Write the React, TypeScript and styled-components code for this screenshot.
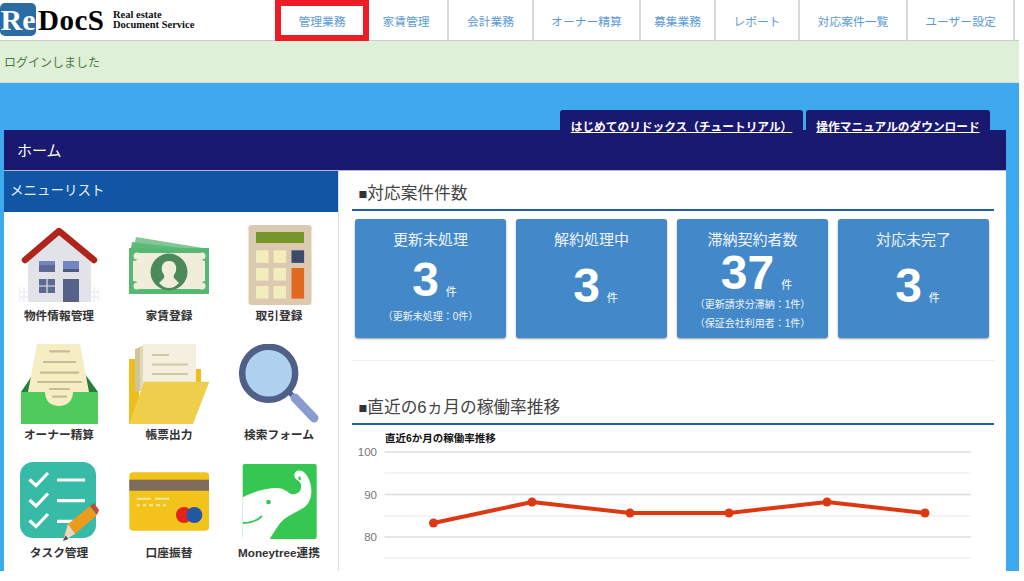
import React from 'react';
import styled, { createGlobalStyle } from 'styled-components';

const GlobalStyle = createGlobalStyle`
  html, body {
    margin: 0;
    padding: 0;
    background: #fff;
    font-family: "Liberation Sans", "Noto Sans CJK JP", sans-serif;
  }
`;

const NAV_ITEMS = [
  { label: '管理業務', width: 94, active: true },
  { label: '家賃管理', width: 84 },
  { label: '会計業務', width: 85 },
  { label: 'オーナー精算', width: 107 },
  { label: '募集業務', width: 75 },
  { label: 'レポート', width: 84 },
  { label: '対応案件一覧', width: 108 },
  { label: 'ユーザー設定', width: 107 },
];

const HouseIcon = () => (
  <svg viewBox="0 0 80 80" width="80" height="80">
    <g stroke="#eceef0" strokeWidth="1.5" fill="none">
      <path d="M0 62v15M5 62v15M10 62v15M70 62v15M75 62v15M80 62v15M0 67h10M0 72h10M70 67h10M70 72h10" />
    </g>
    <path d="M9 30 40 7l32 23v47H9z" fill="#e2e3e8" />
    <path d="M6 35 40 6l35 29" fill="none" stroke="#b0241c" strokeWidth="6.500" strokeLinecap="round" strokeLinejoin="round" />
    <rect x="20" y="36" width="16" height="11" fill="#5c6a92" />
    <rect x="20" y="36" width="16" height="4" fill="#7286c0" />
    <rect x="44" y="36" width="16" height="11" fill="#7286c0" />
    <rect x="44" y="44" width="16" height="3" fill="#4d5a80" />
    <rect x="20" y="54" width="16" height="14" fill="#5c6a92" />
    <path d="M28 54v14M20 61h16" stroke="#e2e3e8" strokeWidth="1.2" />
    <rect x="44" y="54" width="16" height="23" fill="#56628a" />
  </svg>
);

const MoneyIcon = () => (
  <svg viewBox="0 0 80 80" width="80" height="80">
    <path d="M7 12 80 24v10H3z" fill="#82c795" />
    <path d="M3 17 80 26v10H0z" fill="#5dba78" />
    <rect x="0" y="23" width="81" height="46" fill="#57b874" />
    <path d="M8 28h64l-1 3a6 6 0 0 0 5 5v20a6 6 0 0 0-5 5v3H10v-3a6 6 0 0 0-6-5V36a6 6 0 0 0 6-5z" fill="#f0eeda" />
    <circle cx="8" cy="31" r="3.5" fill="#f0eeda" />
    <circle cx="73" cy="31" r="3.5" fill="#f0eeda" />
    <circle cx="8" cy="61" r="3.5" fill="#f0eeda" />
    <circle cx="73" cy="61" r="3.5" fill="#f0eeda" />
    <circle cx="40" cy="47" r="18.5" fill="#4c8a5c" />
    <path d="M40 36c6 0 8 5 7 10-1 3-3 4-2 7l5 5c-3 3-6 5-10 5s-7-2-10-5l5-5c1-3-1-4-2-7-1-5 1-10 7-10z" fill="#f0eeda" />
  </svg>
);

const CalculatorIcon = () => {
  const cols = [17, 34.5, 52.5];
  const rows = [25.3, 43, 61];
  return (
    <svg viewBox="0 0 80 80" width="80" height="80">
      <rect x="9.5" y="0" width="63" height="80" rx="3" fill="#dccab0" />
      <rect x="17" y="7" width="48" height="11" fill="#76962b" />
      {rows.map((y) => cols.slice(0, 2).map((x) => (
        <rect key={`${x}-${y}`} x={x} y={y} width="12.6" height="12.6" fill="#f3ecbc" />
      )))}
      <rect x="52.5" y="25.3" width="12.6" height="12.6" fill="#3e4a69" />
      <rect x="52.5" y="43" width="12.6" height="30.6" fill="#e0691d" />
    </svg>
  );
};

const InboxIcon = () => (
  <svg viewBox="0 0 80 80" width="80" height="80">
    <path d="M2 48 14 30h52l13 18z" fill="#237f3a" />
    <path d="M18 0h43l9 48H9z" fill="#f4eec2" />
    <path d="M2 48h77v32H2z" fill="#4ecb5c" />
    <path d="M9 46h61l-16 2c0 9-6 14-14 14s-14-5-14-14z" fill="#f4eec2" />
    <g stroke="#c4bd9a" strokeWidth="2.2" strokeLinecap="round">
      <path d="M31 7.3h19M25 18h31M22 28.7h37M19 38h43M31 45h19M34 52.7h13" />
    </g>
  </svg>
);

const FolderIcon = () => (
  <svg viewBox="0 0 80 80" width="80" height="80">
    <path d="M0 15h10v65H0zM60 25h12v20H60z" fill="#f0bd1f" />
    <path d="M6 5 14 2v45H6z" fill="#cfc59a" />
    <path d="M11 2h5v45h-5z" fill="#e2d9b4" />
    <rect x="14" y="0" width="53" height="40" fill="#f4efde" />
    <g stroke="#cfc8a4" strokeWidth="2.2" strokeLinecap="round">
      <path d="M24 11h15M24 20.5h34M24 30h34" />
    </g>
    <path d="M15 37.7h65.3L64 80H.3z" fill="#efce4b" strokeLinejoin="round" />
  </svg>
);

const SearchIcon = () => (
  <svg viewBox="0 0 80 80" width="80" height="80">
    <path d="M50 48 58 56" stroke="#505f88" strokeWidth="5" />
    <path d="M56 54 75 74" stroke="#8a9ccf" strokeWidth="9" strokeLinecap="round" />
    <circle cx="29.7" cy="29.3" r="26.5" fill="#aed1ef" stroke="#505f88" strokeWidth="6.5" />
  </svg>
);

const TaskIcon = () => (
  <svg viewBox="0 0 80 80" width="80" height="80">
    <rect x="1" y="0" width="76" height="76" rx="13" fill="#37baa6" />
    <g fill="none" stroke="#fff" strokeWidth="3.2">
      <path d="M10.5 17.5 17 23.5 29 11M10.5 38 17 44 29 31.5M10.5 58.5 17 64.5 29 52" />
      <path d="M38 18h28M38 38.7h28M38 59.3h16" />
    </g>
    <path d="M49 62 71 44 78 53 56 72 44 77z" fill="#eb9c1f" />
    <path d="M71 44 75 41 80 48 78 53z" fill="#b7513c" />
    <path d="M49 62 56 72 44 79z" fill="#e4dcc4" />
    <path d="M46.5 73.5 44 79 49.5 77z" fill="#46505a" />
  </svg>
);

const CardIcon = () => (
  <svg viewBox="0 0 80 80" width="80" height="80">
    <rect x="0.3" y="10.3" width="80" height="58.4" rx="4" fill="#f2c41b" />
    <rect x="0.3" y="17.7" width="80" height="11" fill="#7e6c5a" />
    <path d="M7.7 36.7h14M26 36.7h14" stroke="#f8e7a0" strokeWidth="2" />
    <path d="M7.7 43.3h3M14 43.3h3M20 43.3h4M27 43.3h4M34 43.3h3" stroke="#f8e7a0" strokeWidth="2" />
    <circle cx="55" cy="53" r="8" fill="#e2241a" />
    <circle cx="65.3" cy="53" r="8" fill="#2058a5" />
  </svg>
);

const MoneytreeIcon = () => (
  <svg viewBox="0 0 80 80" width="80" height="80">
    <rect x="3.7" y="2" width="74" height="75" rx="2" fill="#36c752" />
    <path d="M3.700 35.300C14 30 26 26 37.700 26c6 0 10 3 14 6 5 1 9.300-1 10.300-6 .700-4-1-6-3-7.500-3-2-4.500-4-3.300-7 1-3 5-4 9-1.500 5 4 7.300 11 7.700 19 0 7-2.400 13-7.400 16.500-6 4-12 6-18.300 10.500-6 4-11 13-16 21H3.700z" fill="#fff" />
    <path d="M60 14c2 1 2.500 3 1.500 4.500-1.500-.5-3-2-1.500-4.500z" fill="#36c752" />
    <circle cx="29.500" cy="40" r="2.300" fill="#36c752" />
    <path d="M4 61c8 0 15-3 19-7" fill="none" stroke="#36c752" strokeWidth="1.800" />
  </svg>
);

const MENU_ITEMS = [
  { label: '物件情報管理', Icon: HouseIcon },
  { label: '家賃登録', Icon: MoneyIcon },
  { label: '取引登録', Icon: CalculatorIcon },
  { label: 'オーナー精算', Icon: InboxIcon },
  { label: '帳票出力', Icon: FolderIcon },
  { label: '検索フォーム', Icon: SearchIcon },
  { label: 'タスク管理', Icon: TaskIcon },
  { label: '口座振替', Icon: CardIcon },
  { label: 'Moneytree連携', Icon: MoneytreeIcon },
];

const STATS = [
  { title: '更新未処理', value: '3', top: 5, subTop: 2, subs: ['（更新未処理：0件）'] },
  { title: '解約処理中', value: '3', top: 11, subTop: 0, subs: [] },
  { title: '滞納契約者数', value: '37', top: -2, subTop: -3, subs: ['（更新請求分滞納：1件）', '（保証会社利用者：1件）'] },
  { title: '対応未完了', value: '3', top: 11, subTop: 0, subs: [] },
];

const GRID_LINES = [
  { y: 21, major: true, label: '100' },
  { y: 42, major: false },
  { y: 63.5, major: true, label: '90' },
  { y: 85, major: false },
  { y: 106, major: true, label: '80' },
  { y: 127, major: false },
];

const POINTS = [
  [81.5, 92],
  [180, 71],
  [278, 82],
  [377, 82],
  [475, 71],
  [573, 82],
];

const RateChart = () => (
  <svg width="642" height="140" viewBox="0 0 642 140">
    <text x="33" y="11" fontSize="10.500" fontWeight="700" fill="#111">直近6か月の稼働率推移</text>
    {GRID_LINES.map((line) => (
      <g key={line.y}>
        <line x1="32.500" x2="619" y1={line.y} y2={line.y} stroke={line.major ? '#dcdcdc' : '#f0f0f0'} strokeWidth="1.500" />
        {line.label && (
          <text x="25" y={line.y + 4} fontSize="11.500" fill="#777" textAnchor="end">{line.label}</text>
        )}
      </g>
    ))}
    <polyline points={POINTS.map((p) => p.join(',')).join(' ')} fill="none" stroke="#dc3912" strokeWidth="4" />
    {POINTS.map(([x, y]) => (
      <circle key={x} cx={x} cy={y} r="4.500" fill="#dc3912" />
    ))}
  </svg>
);

const App = () => (
  <>
    <GlobalStyle />
    <Page>
      <Header>
        <Logo>
          <LogoMark>Re</LogoMark>
          <LogoWord>DocS</LogoWord>
          <LogoTagline>Real estate<br />Document Service</LogoTagline>
        </Logo>
        <Nav>
          {NAV_ITEMS.map((item) => (
            <NavItem key={item.label} $width={item.width} $active={item.active}>{item.label}</NavItem>
          ))}
        </Nav>
      </Header>
      <Alert>ログインしました</Alert>
      <Main>
        <Tabs>
          <Tab $width={243}>はじめてのリドックス（チュートリアル）</Tab>
          <Tab $width={184}>操作マニュアルのダウンロード</Tab>
        </Tabs>
        <PageTitle>ホーム</PageTitle>
        <Content>
          <Sidebar>
            <SidebarTitle>メニューリスト</SidebarTitle>
            <MenuGrid>
              {MENU_ITEMS.map(({ label, Icon }) => (
                <MenuItem key={label}>
                  <Icon />
                  <MenuLabel>{label}</MenuLabel>
                </MenuItem>
              ))}
            </MenuGrid>
          </Sidebar>
          <Panel>
            <SectionTitle><Square>■</Square>対応案件件数</SectionTitle>
            <StatRow>
              {STATS.map((stat) => (
                <StatCard key={stat.title}>
                  <StatTitle>{stat.title}</StatTitle>
                  <StatValueRow $top={stat.top}>
                    <StatValue>{stat.value}</StatValue>
                    <StatUnit>件</StatUnit>
                  </StatValueRow>
                  <StatSubs $top={stat.subTop}>
                    {stat.subs.map((sub) => <StatSub key={sub}>{sub}</StatSub>)}
                  </StatSubs>
                </StatCard>
              ))}
            </StatRow>
            <Divider />
            <SectionTitle><Square>■</Square>直近の6ヵ月の稼働率推移</SectionTitle>
            <ChartWrap>
              <RateChart />
            </ChartWrap>
          </Panel>
        </Content>
      </Main>
    </Page>
  </>
);

const Page = styled.div`
  width: 1019px;
  height: 571px;
  display: flex;
  flex-direction: column;
  overflow: hidden;
  background: #fff;
`;

const Header = styled.header`
  height: 40px;
  flex-shrink: 0;
  display: flex;
  border-bottom: 1px solid #ccc;
  background: #fff;
`;

const Logo = styled.div`
  width: 275px;
  display: flex;
  align-items: center;
  font-family: "Liberation Serif", serif;
  font-weight: 700;
`;

const LogoMark = styled.div`
  width: 36px;
  height: 33px;
  margin-top: -1px;
  border-radius: 5px;
  background: #2a6ca3;
  color: #fff;
  font-size: 30px;
  line-height: 33px;
  text-align: center;
`;

const LogoWord = styled.div`
  width: 75px;
  margin-left: 2px;
  color: #000;
  font-size: 29px;
  letter-spacing: 0.5px;
`;

const LogoTagline = styled.div`
  color: #111;
  font-size: 10.500px;
  line-height: 10.500px;
  white-space: nowrap;
`;

const Nav = styled.nav`
  display: flex;
  height: 41px;
`;

const NavItem = styled.a<{ $width: number; $active?: boolean }>`
  box-sizing: border-box;
  width: ${({ $width }) => $width}px;
  height: 41px;
  display: flex;
  align-items: center;
  justify-content: center;
  color: #5b9bd5;
  font-size: 11.800px;
  border-right: ${({ $active }) => ($active ? '6px solid #ee1c25' : '2px solid #d8d8d8')};
  border-bottom: ${({ $active }) => ($active ? '6px solid #ee1c25' : '1px solid #ccc')};
  ${({ $active }) => $active && `
    border-top: 6px solid #ee1c25;
    border-left: 6px solid #ee1c25;
    margin-right: -4px;
    position: relative;
    z-index: 1;
  `}
`;

const Alert = styled.div`
  height: 42px;
  flex-shrink: 0;
  box-sizing: border-box;
  padding: 0 4px;
  display: flex;
  align-items: center;
  background: #dff0d8;
  border-bottom: 1px solid #cfe3c6;
  color: #4f7a45;
  font-size: 12px;
`;

const Main = styled.main`
  flex: 1;
  min-height: 0;
  display: flex;
  flex-direction: column;
  box-sizing: border-box;
  padding: 27px 13px 0 4px;
  background: #3fa9ef;
`;

const Tabs = styled.div`
  display: flex;
  justify-content: flex-end;
  gap: 3px;
  padding-right: 16px;
  margin-bottom: -10px;
  position: relative;
  z-index: 1;
`;

const Tab = styled.a<{ $width: number }>`
  box-sizing: border-box;
  width: ${({ $width }) => $width}px;
  height: 30px;
  padding-top: 9px;
  background: #191970;
  border-radius: 3px 3px 0 0;
  color: #fff;
  font-size: 11.700px;
  font-weight: 700;
  line-height: 16px;
  text-align: center;
  text-decoration: underline;
  white-space: nowrap;
`;

const PageTitle = styled.div`
  height: 40px;
  flex-shrink: 0;
  box-sizing: border-box;
  padding: 0 0 2px 13px;
  display: flex;
  align-items: center;
  background: #191970;
  color: #fff;
  font-size: 15px;
`;

const Content = styled.div`
  flex: 1;
  min-height: 0;
  display: flex;
  background: #fff;
  border-top: 1px solid #b5b5d8;
`;

const Sidebar = styled.aside`
  width: 334px;
  flex-shrink: 0;
  border-right: 1px solid #ddd;
`;

const SidebarTitle = styled.div`
  height: 41px;
  box-sizing: border-box;
  padding: 0 0 5px 6px;
  display: flex;
  align-items: center;
  background: #1155a5;
  color: #e8f0f8;
  font-size: 13.500px;
`;

const MenuGrid = styled.div`
  display: grid;
  grid-template-columns: repeat(3, 110px);
  grid-auto-rows: 118.5px;
  padding-top: 13px;
`;

const MenuItem = styled.div`
  display: flex;
  flex-direction: column;
  align-items: center;

  svg {
    display: block;
    flex-shrink: 0;
  }
`;

const MenuLabel = styled.div`
  color: #333;
  font-size: 11.700px;
  font-weight: 700;
  line-height: 21px;
  white-space: nowrap;
`;

const Panel = styled.section`
  flex: 1;
  min-width: 0;
  box-sizing: border-box;
  padding: 0 12px 0 13px;
`;

const SectionTitle = styled.h2`
  margin: 0;
  height: 40px;
  box-sizing: border-box;
  padding: 12px 0 0 6.500px;
  border-bottom: 2px solid #1f5fa8;
  color: #444;
  font-size: 16.700px;
  font-weight: 400;
  line-height: 22px;
`;

const Square = styled.span`
  color: #333;
  font-size: 14.500px;
`;

const StatRow = styled.div`
  display: flex;
  gap: 10px;
  padding: 8px 0 0 3px;
`;

const StatCard = styled.div`
  width: 151px;
  height: 119px;
  box-sizing: border-box;
  padding-top: 11px;
  background: #4389ca;
  border-radius: 3px;
  box-shadow: 0 1px 2px rgba(0, 0, 0, 0.4);
  color: #fff;
  text-align: center;
`;

const StatTitle = styled.div`
  font-size: 15px;
  line-height: 20px;
  color: #eef4fa;
`;

const StatValueRow = styled.div<{ $top: number }>`
  margin-top: ${({ $top }) => $top}px;
  padding-left: 8px;
  display: flex;
  justify-content: center;
  align-items: baseline;
  gap: 7px;
`;

const StatValue = styled.span`
  font-size: 48px;
  font-weight: 700;
  line-height: 50px;
`;

const StatUnit = styled.span`
  font-size: 11px;
`;

const StatSubs = styled.div<{ $top: number }>`
  margin-top: ${({ $top }) => $top}px;
`;

const StatSub = styled.div`
  font-size: 10px;
  line-height: 19px;
  color: #eef4fa;
`;

const Divider = styled.div`
  height: 1px;
  margin: 22px 0 24px;
  background: #eee;
`;

const ChartWrap = styled.div`
  padding-top: 6px;

  svg {
    display: block;
  }
`;

export default App;
